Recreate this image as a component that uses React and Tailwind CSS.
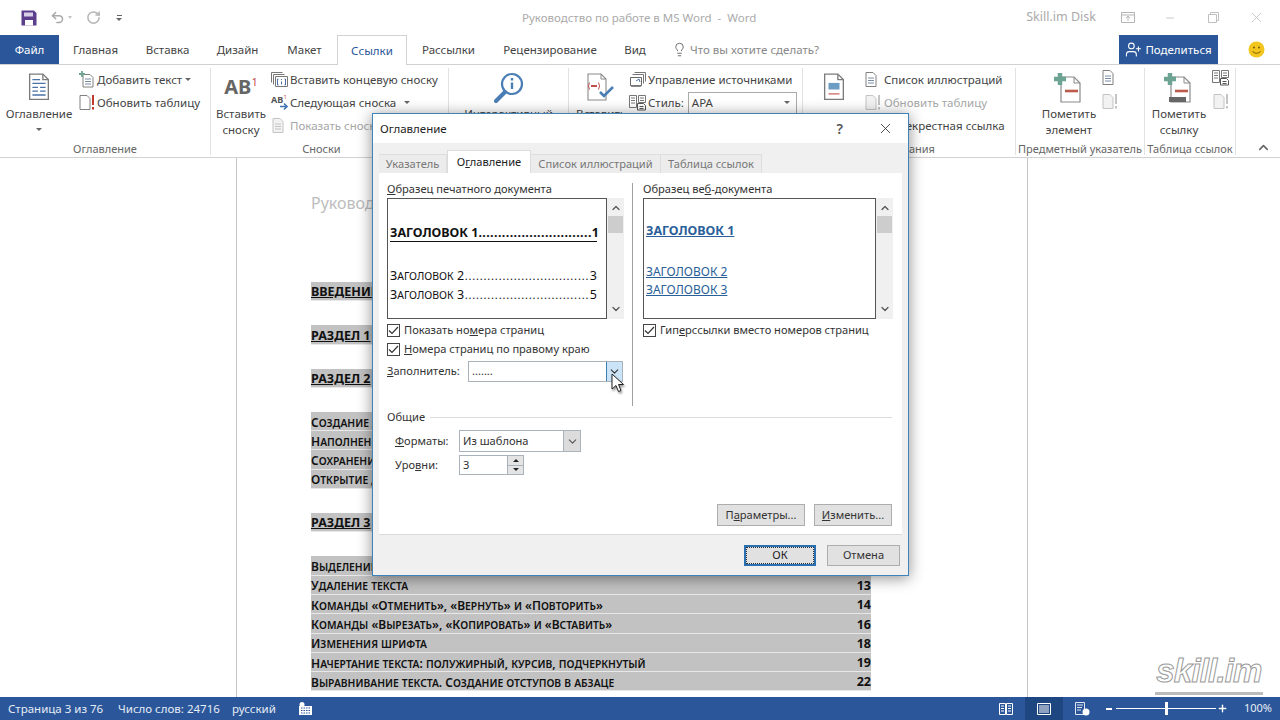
import { ChevronUp, ChevronDown, Lightbulb, UserPlus, X, Undo2, RotateCw, Minus, Plus } from "lucide-react";

function Doc({ size = 22, h, stroke = "#7b7b7b", lines = true, children }) {
  const height = h || size * 1.25;
  return (
    <svg width={size} height={height} viewBox="0 0 20 25" fill="none" className="shrink-0">
      <path d="M1.5 1h12l5 5v18h-17z" fill="#fff" stroke={stroke} strokeWidth="1.2" />
      <path d="M13.5 1v5h5" stroke={stroke} strokeWidth="1.2" />
      {lines && <path d="M4 6h7M4 9.5h12M4 13h5M11 13h5M4 16.5h5M11 16.5h5M4 20h12" stroke="#4a72a8" strokeWidth="1.2" />}
      {children}
    </svg>
  );
}

function SmallDoc({ warn, faded }) {
  return (
    <svg width="18" height="17" viewBox="0 0 18 17" fill="none" className="shrink-0">
      <path d="M2 1.5h7l3 3v11H2z" fill={faded ? "#f2f2f2" : "#fff"} stroke={faded ? "#c4c4c4" : "#808080"} />
      {warn ? (
        <path d="M15 1v10M15 13v2.5" stroke={faded ? "#c4c4c4" : "#c0392b"} strokeWidth="2" />
      ) : (
        <path d="M4 7h6M4 9.5h6M4 12h6" stroke={faded ? "#c4c4c4" : "#7a8ca5"} />
      )}
    </svg>
  );
}

function AddTextIcon() {
  return (
    <svg width="18" height="17" viewBox="0 0 18 17" fill="none" className="shrink-0">
      <path d="M5 3.500h7l3 3v9.500H5z" fill="#fff" stroke="#808080" />
      <path d="M7 8h6M7 10.500h6M7 13h6" stroke="#7a8ca5" />
      <path d="M4 0v6M1 3h6" stroke="#6ca392" strokeWidth="1.800" />
    </svg>
  );
}

function EndnoteIcon() {
  return (
    <svg width="18" height="17" viewBox="0 0 18 17" fill="none" className="shrink-0">
      <path d="M.5 1.500h11M.5 1.500v10M2.500 3.500h11M2.500 3.500v10M4.500 5.500h12v10h-12z" stroke="#777" fill="#fff" />
      <path d="M10.500 8v1M10.500 10.500v3M7.500 8h-1v6h1M13.500 8h1v6h-1" stroke="#4a72a8" />
    </svg>
  );
}

function NextNoteIcon() {
  return (
    <svg width="19" height="17" viewBox="0 0 19 17" fill="none" className="shrink-0">
      <text x="0" y="9" fontSize="9" fontWeight="700" fill="#555">AB</text>
      <text x="12.500" y="5" fontSize="6" fill="#c0504d">1</text>
      <path d="M9 12.500h7M13 9.500l3 3-3 3" stroke="#3f74b0" strokeWidth="1.600" />
    </svg>
  );
}

function ManageIcon() {
  return (
    <svg width="18" height="17" viewBox="0 0 18 17" fill="none" className="shrink-0">
      <path d="M5.500 1.500h11v9M3.500 3.500h11v9" stroke="#777" />
      <path d="M1.500 6.500h11v8h-11z" fill="#fff" stroke="#666" />
      <path d="M3 14.500h8l1.500 1.500H1.500z" fill="#888" />
      <path d="M7 10l3-2 1 3" stroke="#4a72a8" />
    </svg>
  );
}

function StyleIcon() {
  return (
    <svg width="18" height="17" viewBox="0 0 18 17" fill="none" className="shrink-0">
      <path d="M.5 1.500h7v12h-7zM9.500 1.500h7v7h-7z" stroke="#777" fill="#fff" />
      <path d="M2 4h4M2 6.500h4M2 9h4M11 4h4M11 6.500h4" stroke="#777" />
      <path d="M8.500 9.500h6l2 2v4.500h-8z" fill="#fff" stroke="#555" />
      <path d="M10.500 12.500h4M10.500 14.500h4" stroke="#555" />
    </svg>
  );
}

function PlusMinusDoc({ scroll }) {
  return (
    <svg width="30" height="31" viewBox="0 0 30 31" fill="none">
      <path d="M7 5h13l6 6v19H7z" fill="#fff" stroke="#8a8a8a" strokeWidth="1.2" />
      {scroll && <path d="M5 25h17v5H5z" fill="#666" />}
      <path d="M20 5v6h6" stroke="#8a8a8a" />
      <path d="M6 1v12M0 7h12" stroke="#6ca392" strokeWidth="4.5" />
      <path d="M11 19h13" stroke="#bd5a4c" strokeWidth="2.6" />
    </svg>
  );
}

function Caret() {
  return <span className="inline-block mt-[6px] border-x-[3px] border-t-[3px] border-x-transparent border-t-[#666]" />;
}

function Big({ w, icon, lines, caret }) {
  return (
    <div className={`flex flex-col items-center shrink-0 ${w}`}>
      <div className="h-[38px] flex items-center justify-center">{icon}</div>
      {lines.map((l) => (
        <div key={l} className="h-[16px] leading-[16px] whitespace-nowrap">{l}</div>
      ))}
      {caret && <Caret />}
    </div>
  );
}

function Row({ icon, children, gray, iconW = "w-[19px]" }) {
  return (
    <div className={`h-[23px] flex items-center whitespace-nowrap ${gray ? "text-[#a6a6a6]" : ""}`}>
      <span className={`${iconW} flex items-center shrink-0`}>{icon}</span>
      {children}
    </div>
  );
}

function Group({ w, label, border = true, children, pad = "", labelPad = "" }) {
  return (
    <div className={`shrink-0 h-[87px] flex flex-col ${w} ${border ? "border-r border-[#e2e2e2]" : ""}`}>
      <div className={`flex-1 flex items-start ${pad}`}>{children}</div>
      <div className={`h-[16px] leading-[20px] text-[11px] text-center text-[#666] whitespace-nowrap ${labelPad}`}>{label}</div>
    </div>
  );
}

function Ribbon() {
  return (
    <div className="h-[93px] bg-white border-b border-[#d2d2d2] flex pt-[3px] items-start text-[#444]">
      <Group w="w-[211px]" label="Оглавление" pad="pl-[4px]">
        <Big w="w-[70px]" lines={["Оглавление"]} caret icon={<Doc size={22} />} />
        <div className="ml-[4px]">
          <Row icon={<AddTextIcon />}>
            Добавить текст<span className="ml-[3px] mb-[6px]"><Caret /></span>
          </Row>
          <Row icon={<SmallDoc warn />}>Обновить таблицу</Row>
        </div>
      </Group>
      <Group w="w-[238px]" label="Сноски" pad="pl-[4px]" labelPad="pr-[16px]">
        <Big
          w="w-[52px]"
          lines={["Вставить", "сноску"]}
          icon={
            <span className="font-bold text-[20px] text-[#666] leading-none">
              AB<sup className="text-[#c0504d] text-[11px] font-normal -top-[8px]">1</sup>
            </span>
          }
        />
        <div className="ml-[4px]">
          <Row icon={<EndnoteIcon />}>Вставить концевую сноску</Row>
          <Row icon={<NextNoteIcon />}>
            Следующая сноска <span className="ml-[8px] mb-[6px]"><Caret /></span>
          </Row>
          <Row gray icon={<SmallDoc faded />}>Показать сноски</Row>
        </div>
      </Group>
      <Group w="w-[120px]" label="Ссылки" pad="justify-center">
        <Big
          w="w-[100px]"
          lines={["Интерактивный"]}
          icon={
            <svg width="30" height="31" viewBox="0 0 30 31" fill="none">
              <circle cx="18" cy="12" r="10" stroke="#4a7eb5" strokeWidth="2.2" fill="#fff" />
              <path d="M11 20L2 29" stroke="#4a7eb5" strokeWidth="4" strokeLinecap="round" />
              <path d="M18 10.500v6.500M18 6v2.400" stroke="#4a7eb5" strokeWidth="2.4" />
            </svg>
          }
        />
      </Group>
      <Group w="w-[234px]" label="Ссылки и списки" pad="pl-[7px]">
        <Big
          w="w-[50px]"
          lines={["Вставить"]}
          icon={
            <svg width="30" height="30" viewBox="0 0 30 30" fill="none">
              <path d="M2 2h13l5 5v21H2z" fill="#fff" stroke="#8a8a8a" strokeWidth="1.1" />
              <path d="M15 2v5h5" stroke="#8a8a8a" />
              <path d="M5 14h6" stroke="#c0504d" strokeWidth="2" />
              <path d="M3.500 10.500q-2 3.500 0 7M12.500 10.500q2 3.500 0 7" stroke="#c0504d" />
              <path d="M14 20l4 4 9-9" stroke="#4a7eb5" strokeWidth="2.6" />
            </svg>
          }
        />
        <div className="ml-[3px]">
          <Row icon={<ManageIcon />}>Управление источниками</Row>
          <Row icon={<StyleIcon />}>
            Стиль:
            <span className="ml-[4px] w-[109px] h-[22px] border border-[#ababab] pl-[3px] flex items-center justify-between pr-[6px] bg-white">
              APA <span className="mb-[6px]"><Caret /></span>
            </span>
          </Row>
        </div>
      </Group>
      <Group w="w-[213px]" label="Названия" pad="pl-[20px]">
        <Big
          w="w-[22px]"
          lines={[]}
          icon={
            <Doc size={22} lines={false}>
              <path d="M5 9h10v6H5z" fill="#6a9cc4" />
              <path d="M5 19h10" stroke="#c0504d" />
            </Doc>
          }
        />
        <div className="ml-[19px]">
          <Row icon={<SmallDoc />} iconW="w-[20px]">Список иллюстраций</Row>
          <Row gray icon={<SmallDoc warn faded />} iconW="w-[20px]">Обновить таблицу</Row>
          <Row icon={<SmallDoc />} iconW="w-[20px]">Перекрестная ссылка</Row>
        </div>
      </Group>
      <Group w="w-[129px]" label="Предметный указатель" pad="pl-[23px]">
        <Big w="w-[60px]" lines={["Пометить", "элемент"]} icon={<PlusMinusDoc />} />
        <div className="flex flex-col gap-[7px] mt-[1px] ml-[2px]">
          <SmallDoc />
          <SmallDoc warn faded />
        </div>
      </Group>
      <Group w="w-[91px]" label="Таблица ссылок" pad="pl-[4px]">
        <Big w="w-[60px]" lines={["Пометить", "ссылку"]} icon={<PlusMinusDoc scroll />} />
        <div className="flex flex-col gap-[7px] mt-[1px] ml-[3px]">
          <StyleIcon />
          <SmallDoc warn faded />
        </div>
      </Group>
      <div className="flex-1 h-[87px] flex items-end justify-end pr-[9px]">
        <ChevronUp size={15} strokeWidth={2.5} color="#666" />
      </div>
    </div>
  );
}

const tabs = [
  ["Главная", "w-[73px]"],
  ["Вставка", "w-[71px]"],
  ["Дизайн", "w-[69px]"],
  ["Макет", "w-[65px]"],
];

function TitleBar() {
  return (
    <div className="h-[35px] flex items-center text-[#aaa] relative">
      <svg width="16" height="16" viewBox="0 0 16 16" className="ml-[21px]">
        <path d="M.5.5h12.500l2.500 2.500v12.500H.5z" fill="#5b3f8c" />
        <path d="M3 2.500h9v4H3z" fill="#d8d0e6" />
        <path d="M4 10h8v5.500H4z" fill="#fff" />
      </svg>
      <Undo2 size={15} color="#aaa" strokeWidth={2.4} className="ml-[13px]" />
      <span className="ml-[3px] border-x-[2px] border-t-[3px] border-x-transparent border-t-[#c4c4c4]" />
      <RotateCw size={15} color="#b5b5b5" strokeWidth={2.4} className="ml-[14px]" />
      <span className="ml-[15px] flex flex-col items-center gap-[2px]">
        <span className="w-[5px] h-px bg-[#666]" />
        <span className="border-x-[3px] border-t-[3px] border-x-transparent border-t-[#666]" />
      </span>
      <span className="absolute left-[522px] top-[9px] whitespace-pre">Руководство по работе в MS Word  -  Word</span>
      <div className="ml-auto flex items-center">
        <span className="text-[12.500px]">Skill.im Disk</span>
        <svg width="14" height="11" viewBox="0 0 14 11" fill="none" className="ml-[25px]">
          <path d="M.5.500h13v10H.5zM.5 3h13M7 9V4.500M5 6l2-2 2 2" stroke="#b5b5b5" />
        </svg>
        <Minus size={12} color="#c8c8c8" className="ml-[29px]" />
        <svg width="11" height="11" viewBox="0 0 11 11" fill="none" className="ml-[32px]">
          <path d="M.5 2.500h8v8h-8zM2.500 2.500v-2h8v8h-2" stroke="#c0c0c0" />
        </svg>
        <X size={17} color="#c0c0c0" strokeWidth={1.2} className="ml-[29px] mr-[15px]" />
      </div>
    </div>
  );
}

function TabBar() {
  return (
    <div className="h-[30px] flex items-stretch border-b border-[#d2d2d2] text-[#444] text-center leading-[29px]">
      <div className="w-[59px] bg-[#2b579a] text-white">Файл</div>
      {tabs.map(([t, w]) => (
        <div key={t} className={w}>{t}</div>
      ))}
      <div className="w-[70px] h-[30px] bg-white border-x border-t border-[#d2d2d2] text-[#2b579a]">Ссылки</div>
      <div className="w-[83px]">Рассылки</div>
      <div className="w-[120px]">Рецензирование</div>
      <div className="w-[50px]">Вид</div>
      <div className="flex items-center ml-[12px] text-[#888]">
        <Lightbulb size={15} color="#666" strokeWidth={1.5} className="mr-[3px]" />
        Что вы хотите сделать?
      </div>
      <div className="ml-auto w-[99px] h-[29px] bg-[#2b579a] text-white flex items-center justify-center gap-[3px]">
        <UserPlus size={17} color="#fff" strokeWidth={1.5} />
        Поделиться
      </div>
      <div className="w-[62px] flex items-center justify-center pl-[14px]">
        <svg width="17" height="17" viewBox="0 0 17 17">
          <circle cx="8.500" cy="8.500" r="8" fill="#f3c51f" />
          <circle cx="6" cy="6.500" r="1" fill="#7a5c00" />
          <circle cx="11" cy="6.500" r="1" fill="#7a5c00" />
          <path d="M4.500 10.500q4 3.500 8 0" stroke="#7a5c00" fill="none" />
        </svg>
      </div>
    </div>
  );
}

// small caps by hand: the fonts here have no usable smcp for cyrillic
function Caps({ text, big = "text-[12px]", small = "text-[10.300px]" }) {
  return text.split(/([а-яё]+)/).map((part, i) =>
    i % 2 ? (
      <span key={i} className={`uppercase ${small}`}>{part}</span>
    ) : (
      <span key={i} className={big}>{part}</span>
    )
  );
}

function TocRow({ text, page, heading, className = "" }) {
  return (
    <div
      className={`h-[19.300px] pt-[3px] bg-[#c2c2c2] flex justify-between items-center text-[#111] font-bold border-b border-[#e8e8e8] ${className}`}
    >
      {heading ? (
        <span className="whitespace-nowrap underline text-[12.500px]">{text}</span>
      ) : (
        <span className="whitespace-nowrap font-semibold">
          <Caps text={text} />
        </span>
      )}
      <span className="text-[12.500px]">{page}</span>
    </div>
  );
}

function Page() {
  return (
    <div className="flex-1 overflow-hidden bg-white relative">
      <div className="ml-[236px] w-[792px] h-full border-x border-[#c6c6c6] pl-[74px] pr-[156px]">
        <div className="pt-[33px] h-[124px] text-[16px] text-[#bdbdbd]">Руководство по работе</div>
        <TocRow heading text="ВВЕДЕНИЕ" page="3" />
        <TocRow heading text="РАЗДЕЛ 1" page="4" className="mt-[24px]" />
        <TocRow heading text="РАЗДЕЛ 2" page="5" className="mt-[24px]" />
        <TocRow text="Создание документа" page="5" className="mt-[24px]" />
        <TocRow text="Наполнение документа" page="7" />
        <TocRow text="Сохранение документа" page="9" />
        <TocRow text="Открытие документа" page="10" />
        <TocRow heading text="РАЗДЕЛ 3" page="11" className="mt-[24px]" />
        <TocRow text="Выделение текста" page="12" className="mt-[24px]" />
        <TocRow text="Удаление текста" page="13" />
        <TocRow text="Команды «Отменить», «Вернуть» и «Повторить»" page="14" />
        <TocRow text="Команды «Вырезать», «Копировать» и «Вставить»" page="16" />
        <TocRow text="Изменения шрифта" page="18" />
        <TocRow text="Начертание текста: полужирный, курсив, подчеркнутый" page="19" />
        <TocRow text="Выравнивание текста. Создание отступов в абзаце" page="22" />
      </div>
      <div className="absolute left-[1155px] top-[493px] w-[108px] border-b-[3px] border-[#bbb] pb-px text-center italic font-bold text-[33px] leading-[40px] tracking-tight text-white [-webkit-text-stroke:1px_#999] font-['Liberation_Sans',sans-serif]">
        skill.im
      </div>
    </div>
  );
}

function StatusBar() {
  return (
    <div className="h-[23px] bg-[#2b579a] text-[#e6ecf5] text-[11.500px] flex items-center">
      <span className="ml-[8px] w-[110px]">Страница 3 из 76</span>
      <span className="w-[114px]">Число слов: 24716</span>
      <span className="w-[67px]">русский</span>
      <svg width="13" height="13" viewBox="0 0 13 13">
        <path d="M0 4h13v9H0z" fill="#fff" />
        <circle cx="3" cy="2.500" r="2.500" fill="#fff" />
        <path d="M2 6h9M2 8.500h9M2 11h9" stroke="#2b579a" strokeDasharray="1.500 1" />
      </svg>
      <div className="ml-auto flex items-center h-full">
        <svg width="14" height="12" viewBox="0 0 14 12" fill="none">
          <path d="M.5.500h6v11h-6zM7.500.500h6v11h-6zM2 3h3M2 5.500h3M2 8h3M9 3h3M9 5.500h3M9 8h3" stroke="#fff" />
        </svg>
        <div className="w-[38px] h-full bg-[#1e4680] ml-[12px] flex items-center justify-center">
          <svg width="14" height="12" viewBox="0 0 14 12" fill="none">
            <path d="M.5.500h13v11H.5zM2 3h10M2 5h10M2 7h10M2 9h10" stroke="#fff" />
          </svg>
        </div>
        <svg width="15" height="14" viewBox="0 0 15 14" fill="none" className="ml-[12px]">
          <path d="M.5.500h9v12h-9zM2 3h6M2 5.500h5M2 8h4" stroke="#dfe6f1" />
          <circle cx="11" cy="10" r="3.500" fill="#fff" />
        </svg>
        <span className="ml-[16px] w-[6px] h-[2px] bg-white" />
        <div className="relative ml-[4px] w-[100px] h-px bg-white">
          <span className="absolute left-[49px] -top-[6px] w-[3px] h-[13px] bg-white" />
        </div>
        <Plus size={11} color="#fff" strokeWidth={3} className="ml-[1px]" />
        <span className="ml-[16px] mr-[8px] text-[11px]">100%</span>
      </div>
    </div>
  );
}

function Check({ children, className = "" }) {
  return (
    <div className={`flex items-center whitespace-nowrap ${className}`}>
      <span className="w-[13px] h-[13px] border border-[#444] bg-white mr-[4px] flex items-center justify-center shrink-0">
        <svg width="11" height="9" viewBox="0 0 11 9" fill="none">
          <path d="M1 4.500l3 3 6-6.500" stroke="#333" strokeWidth="1.200" />
        </svg>
      </span>
      {children}
    </div>
  );
}

function Scroller() {
  return (
    <div className="w-[17px] h-[121px] bg-[#f0f0f0] flex flex-col items-center justify-between py-[4px]">
      <div className="flex flex-col items-center w-full">
        <ChevronUp size={12} strokeWidth={2.5} color="#555" />
        <span className="mt-[2px] w-[15px] h-[17px] bg-[#cdcdcd]" />
      </div>
      <ChevronDown size={12} strokeWidth={2.5} color="#555" />
    </div>
  );
}

function DialogTab({ children, active, w }) {
  if (active) {
    return <div className={`h-[23px] ${w} bg-white text-center leading-[22px] text-[#222] border-x border-t border-[#dcdcdc]`}>{children}</div>;
  }
  return <div className={`h-[19px] ${w} text-center bg-[#ececec] border-r border-t border-[#dedede] text-[#777] leading-[18px]`}>{children}</div>;
}

function Button({ children, className = "" }) {
  return (
    <div className={`flex items-center justify-center bg-[#e1e1e1] border border-[#adadad] text-[#333] ${className}`}>
      {children}
    </div>
  );
}

function Dialog() {
  return (
    <div className="absolute left-[372px] top-[113px] w-[537px] h-[463px] bg-[#f0f0f0] border border-[#3f83b8] shadow-[0_2px_14px_rgba(0,0,0,0.45)] flex flex-col text-[#333] text-[11.100px]">
      <div className="h-[29px] bg-white flex items-center pl-[7px] text-[#222] text-[11.500px]">
        Оглавление
        <span className="ml-auto text-[14px] font-semibold text-[#555]">?</span>
        <X size={17} color="#333" strokeWidth={1.2} className="ml-[34px] mr-[14px]" />
      </div>
      <div className="h-[30px] flex items-end pl-[6px]">
        <DialogTab w="w-[68px]">Указатель</DialogTab>
        <DialogTab active w="w-[84px]">
          О<u>г</u>лавление
        </DialogTab>
        <DialogTab w="w-[130px]">Список иллюстраций</DialogTab>
        <DialogTab w="w-[101px]">Таблица ссылок</DialogTab>
      </div>
      <div className="mx-[6px] h-[362px] bg-white border-b border-[#dadada] px-[8px] flex flex-col">
        <div className="flex h-[233px] pt-[10px]">
          <div className="w-[246px] border-r border-[#a0a0a0]">
            <div className="h-[15px] leading-[12px] whitespace-nowrap">
              <u>О</u>бразец печатного документа
            </div>
            <div className="flex">
              <div className="w-[220px] h-[121px] border border-[#555] pl-[2px] pr-[9px] text-[#111]">
                <div className="mt-[26px] font-bold text-[12.500px] flex justify-between border-b border-[#111] leading-[16px] whitespace-nowrap">
                  <span>ЗАГОЛОВОК 1</span>
                  <span className="tracking-[0.400px]">.............................</span>
                  <span>1</span>
                </div>
                <div className="mt-[26px] flex justify-between leading-[16px] whitespace-nowrap">
                  <span><Caps text="Заголовок 2" big="text-[12.500px]" small="text-[10.500px]" /></span>
                  <span className="tracking-[0.800px]">.................................</span>
                  <span className="text-[12.500px]">3</span>
                </div>
                <div className="mt-[3px] flex justify-between leading-[16px] whitespace-nowrap">
                  <span><Caps text="Заголовок 3" big="text-[12.500px]" small="text-[10.500px]" /></span>
                  <span className="tracking-[0.800px]">.................................</span>
                  <span className="text-[12.500px]">5</span>
                </div>
              </div>
              <Scroller />
            </div>
            <Check className="mt-[2px] h-[18px]">Показать но<u>м</u>ера страниц</Check>
            <Check className="mt-px h-[19px]">
              <u>Н</u>омера страниц по правому краю
            </Check>
            <div className="flex items-center mt-[2px]">
              <span className="w-[81px]">
                <u>З</u>аполнитель:
              </span>
              <div className="w-[155px] h-[21px] border border-[#aab2bb] flex items-center justify-between pl-[3px]">
                .......
                <span className="w-[16px] h-full bg-[#cce4f7] border-l border-[#3c7fb1] flex items-center justify-center">
                  <ChevronDown size={13} color="#333" />
                </span>
              </div>
            </div>
          </div>
          <div className="pl-[10px]">
            <div className="h-[15px] leading-[12px] whitespace-nowrap">
              Образец ве<u>б</u>-документа
            </div>
            <div className="flex">
              <div className="w-[233px] h-[121px] border border-[#555] px-[2px] text-[#2a6099]">
                <div className="mt-[24px] font-bold text-[12.500px] underline leading-[16px]">ЗАГОЛОВОК 1</div>
                <div className="mt-[25px] underline leading-[16px] text-[12px]">ЗАГОЛОВОК 2</div>
                <div className="mt-[2px] underline leading-[16px] text-[12px]">ЗАГОЛОВОК 3</div>
              </div>
              <Scroller />
            </div>
            <Check className="mt-[2px] h-[18px]">Гип<u>е</u>рссылки вместо номеров страниц</Check>
          </div>
        </div>
        <div className="flex items-center mt-[4px] h-[14px] pr-[2px]">
          Общие
          <span className="flex-1 ml-[5px] h-px bg-[#dcdcdc]" />
        </div>
        <div className="flex items-center mt-[6px] pl-[8px]">
          <span className="w-[64px]">
            <u>Ф</u>орматы:
          </span>
          <div className="w-[122px] h-[22px] border border-[#aab2bb] flex items-center justify-between pl-[3px]">
            Из шаблона
            <span className="w-[17px] h-full bg-[#dcdcdc] border-l border-[#aab2bb] flex items-center justify-center">
              <ChevronDown size={13} color="#555" />
            </span>
          </div>
        </div>
        <div className="flex items-center mt-[3px] pl-[8px]">
          <span className="w-[64px]">
            Уро<u>в</u>ни:
          </span>
          <div className="w-[65px] h-[20px] border border-[#aab2bb] flex items-center justify-between pl-[3px]">
            3
            <span className="w-[16px] h-full border-l border-[#aab2bb] flex flex-col">
              <span className="flex-1 bg-[#e4e4e4] border-b border-[#aab2bb] flex items-center justify-center">
                <span className="border-x-[3px] border-b-[3px] border-x-transparent border-b-[#222]" />
              </span>
              <span className="flex-1 bg-[#e4e4e4] flex items-center justify-center">
                <span className="border-x-[3px] border-t-[3px] border-x-transparent border-t-[#222]" />
              </span>
            </span>
          </div>
        </div>
        <div className="flex justify-end gap-[9px] mt-[29px] pr-[2px]">
          <Button className="w-[88px] h-[22px]">
            П<u>а</u>раметры...
          </Button>
          <Button className="w-[78px] h-[22px]">
            <u>И</u>зменить...
          </Button>
        </div>
      </div>
      <div className="flex justify-end gap-[11px] pr-[8px] mt-[10px]">
        <div className="w-[72px] h-[21px] bg-[#e1e1e1] border-2 border-[#2a6fb0] flex items-center justify-center text-[#222] outline outline-1 -outline-offset-[3px] outline-dotted outline-[#333]">
          ОК
        </div>
        <Button className="w-[73px] h-[21px]">Отмена</Button>
      </div>
    </div>
  );
}

function Pointer() {
  return (
    <svg width="15" height="21" viewBox="0 0 15 21" className="absolute left-[611px] top-[373px] drop-shadow-[1px_2px_1px_rgba(0,0,0,0.4)]">
      <path d="M1 1v15l4-3.500 2.500 6 2.500-1-2.500-6h5z" fill="#fff" stroke="#222" />
    </svg>
  );
}

export default function App() {
  return (
    <div className="relative w-[1280px] h-[720px] overflow-hidden bg-white flex flex-col font-['Noto_Sans',sans-serif] text-[11.500px]">
      <TitleBar />
      <TabBar />
      <Ribbon />
      <Page />
      <StatusBar />
      <Dialog />
      <Pointer />
    </div>
  );
}
